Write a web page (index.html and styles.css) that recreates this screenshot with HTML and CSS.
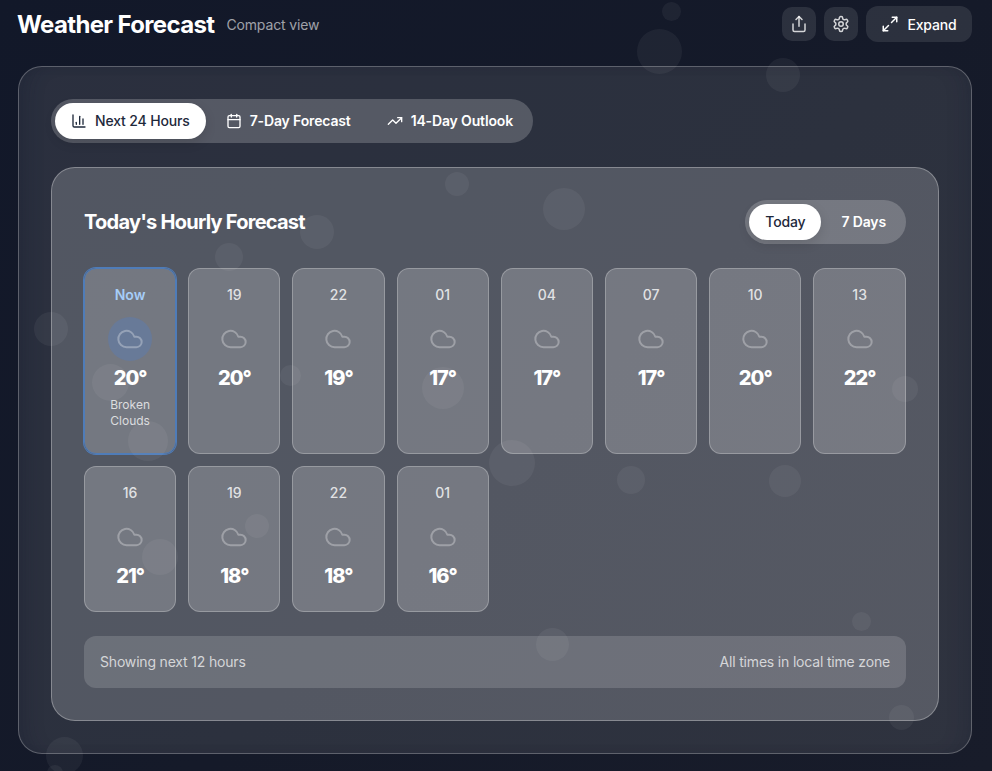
FILE: index.html
```html
<!DOCTYPE html>
<html lang="en">
<head>
    <meta charset="UTF-8">
    <meta name="viewport" content="width=device-width, initial-scale=1.0">
    <title>Weather Forecast</title>
    <link rel="stylesheet" href="styles.css">
</head>
<body>

<svg class="sprite" aria-hidden="true">
    <symbol id="i-chart" viewBox="0 0 24 24"><path d="M3 3v16a2 2 0 0 0 2 2h16"/><path d="M18 17V9"/><path d="M13 17V5"/><path d="M8 17v-3"/></symbol>
    <symbol id="i-calendar" viewBox="0 0 24 24"><path d="M8 2v4"/><path d="M16 2v4"/><rect x="3" y="4" width="18" height="18" rx="2"/><path d="M3 10h18"/></symbol>
    <symbol id="i-trend" viewBox="0 0 24 24"><polyline points="22 7 13.5 15.5 8.5 10.5 2 17"/><polyline points="16 7 22 7 22 13"/></symbol>
    <symbol id="i-share" viewBox="0 0 24 24"><path d="M4 12v8a2 2 0 0 0 2 2h12a2 2 0 0 0 2-2v-8"/><polyline points="16 6 12 2 8 6"/><line x1="12" y1="2" x2="12" y2="15"/></symbol>
    <symbol id="i-gear" viewBox="0 0 24 24"><path d="M12.22 2h-.44a2 2 0 0 0-2 2v.18a2 2 0 0 1-1 1.73l-.43.25a2 2 0 0 1-2 0l-.15-.08a2 2 0 0 0-2.73.73l-.22.38a2 2 0 0 0 .73 2.73l.15.1a2 2 0 0 1 1 1.72v.51a2 2 0 0 1-1 1.74l-.15.09a2 2 0 0 0-.73 2.73l.22.38a2 2 0 0 0 2.73.73l.15-.08a2 2 0 0 1 2 0l.43.25a2 2 0 0 1 1 1.73V20a2 2 0 0 0 2 2h.44a2 2 0 0 0 2-2v-.18a2 2 0 0 1 1-1.73l.43-.25a2 2 0 0 1 2 0l.15.08a2 2 0 0 0 2.73-.73l.22-.39a2 2 0 0 0-.73-2.73l-.15-.08a2 2 0 0 1-1-1.74v-.5a2 2 0 0 1 1-1.74l.15-.09a2 2 0 0 0 .73-2.73l-.22-.38a2 2 0 0 0-2.73-.73l-.15.08a2 2 0 0 1-2 0l-.43-.25a2 2 0 0 1-1-1.73V4a2 2 0 0 0-2-2z"/><circle cx="12" cy="12" r="3"/></symbol>
    <symbol id="i-expand" viewBox="0 0 24 24"><polyline points="15 3 21 3 21 9"/><polyline points="9 21 3 21 3 15"/><line x1="21" y1="3" x2="14" y2="10"/><line x1="3" y1="21" x2="10" y2="14"/></symbol>
    <symbol id="i-cloud" viewBox="0 0 24 24"><path d="M17.5 19H9a7 7 0 1 1 6.71-9h1.79a4.5 4.5 0 1 1 0 9Z"/></symbol>
</svg>

<header class="top-bar">
    <div class="title-group">
        <h1>Weather Forecast</h1>
        <span class="subtitle">Compact view</span>
    </div>
    <div class="actions">
        <button class="icon-btn"><svg class="icon icon-18"><use href="#i-share"/></svg></button>
        <button class="icon-btn"><svg class="icon icon-18"><use href="#i-gear"/></svg></button>
        <button class="expand-btn"><svg class="icon icon-18"><use href="#i-expand"/></svg>Expand</button>
    </div>
</header>

<main class="panel">
    <nav class="pill-group tabs">
        <button class="pill active"><svg class="icon"><use href="#i-chart"/></svg>Next 24 Hours</button>
        <button class="pill"><svg class="icon"><use href="#i-calendar"/></svg>7-Day Forecast</button>
        <button class="pill"><svg class="icon"><use href="#i-trend"/></svg>14-Day Outlook</button>
    </nav>

    <section class="forecast">
        <div class="forecast-head">
            <h2>Today's Hourly Forecast</h2>
            <div class="pill-group">
                <button class="pill active">Today</button>
                <button class="pill">7 Days</button>
            </div>
        </div>

        <div class="hours">
            <div class="hour current">
                <span class="time">Now</span>
                <span class="cloud"><svg class="icon icon-28"><use href="#i-cloud"/></svg></span>
                <span class="temp">20°</span>
                <span class="desc">Broken Clouds</span>
            </div>
            <div class="hour"><span class="time">19</span><span class="cloud"><svg class="icon icon-28"><use href="#i-cloud"/></svg></span><span class="temp">20°</span></div>
            <div class="hour"><span class="time">22</span><span class="cloud"><svg class="icon icon-28"><use href="#i-cloud"/></svg></span><span class="temp">19°</span></div>
            <div class="hour"><span class="time">01</span><span class="cloud"><svg class="icon icon-28"><use href="#i-cloud"/></svg></span><span class="temp">17°</span></div>
            <div class="hour"><span class="time">04</span><span class="cloud"><svg class="icon icon-28"><use href="#i-cloud"/></svg></span><span class="temp">17°</span></div>
            <div class="hour"><span class="time">07</span><span class="cloud"><svg class="icon icon-28"><use href="#i-cloud"/></svg></span><span class="temp">17°</span></div>
            <div class="hour"><span class="time">10</span><span class="cloud"><svg class="icon icon-28"><use href="#i-cloud"/></svg></span><span class="temp">20°</span></div>
            <div class="hour"><span class="time">13</span><span class="cloud"><svg class="icon icon-28"><use href="#i-cloud"/></svg></span><span class="temp">22°</span></div>
            <div class="hour"><span class="time">16</span><span class="cloud"><svg class="icon icon-28"><use href="#i-cloud"/></svg></span><span class="temp">21°</span></div>
            <div class="hour"><span class="time">19</span><span class="cloud"><svg class="icon icon-28"><use href="#i-cloud"/></svg></span><span class="temp">18°</span></div>
            <div class="hour"><span class="time">22</span><span class="cloud"><svg class="icon icon-28"><use href="#i-cloud"/></svg></span><span class="temp">18°</span></div>
            <div class="hour"><span class="time">01</span><span class="cloud"><svg class="icon icon-28"><use href="#i-cloud"/></svg></span><span class="temp">16°</span></div>
        </div>

        <div class="note">
            <span>Showing next 12 hours</span>
            <span>All times in local time zone</span>
        </div>
    </section>
</main>

<!-- floating background bubbles -->
<div class="bubbles" aria-hidden="true">
    <i class="b1"></i><i class="b2"></i><i class="b3"></i><i class="b4"></i><i class="b5"></i><i class="b6"></i>
    <i class="b7"></i><i class="b8"></i><i class="b9"></i><i class="b10"></i><i class="b11"></i><i class="b12"></i>
    <i class="b13"></i><i class="b14"></i><i class="b15"></i><i class="b16"></i><i class="b17"></i><i class="b18"></i>
    <i class="b19"></i><i class="b20"></i><i class="b21"></i><i class="b22"></i><i class="b23"></i>
</div>

</body>
</html>
```

FILE: styles.css
```css
* {
    box-sizing: border-box;
}
html, body {
    height: 100%;
}
body {
    margin: 0;
    padding: 6px 20px 17px 18px;
    height: 771px;
    overflow: hidden;
    position: relative;
    font-family: Inter, "Liberation Sans", sans-serif;
    color: #fff;
    background: linear-gradient(135deg, #121829 0%, #151a29 55%, #181c2a 100%);
}
button {
    font: inherit;
    color: inherit;
    border: none;
    background: none;
    cursor: pointer;
}
.sprite {
    display: none;
}
.icon {
    width: 16px;
    height: 16px;
    flex: none;
    fill: none;
    stroke: currentColor;
    stroke-width: 2;
    stroke-linecap: round;
    stroke-linejoin: round;
}
.icon-18 {
    width: 18px;
    height: 18px;
}
.icon-28 {
    width: 28px;
    height: 28px;
    stroke-width: 1.7;
}

/* header */
.top-bar {
    display: flex;
    justify-content: space-between;
    align-items: center;
    height: 36px;
    margin-bottom: 24px;
}
.title-group {
    display: flex;
    align-items: center;
    gap: 12px;
}
h1 {
    margin: 2px 0 0 -1px;
    font-size: 24px;
    line-height: 36px;
    font-weight: 700;
    letter-spacing: -0.65px;
}
.subtitle {
    font-size: 14px;
    letter-spacing: -0.15px;
    color: rgba(255, 255, 255, 0.6);
}
.actions {
    display: flex;
    align-items: center;
    gap: 8px;
}
.icon-btn {
    width: 34px;
    height: 34px;
    display: flex;
    align-items: center;
    justify-content: center;
    border-radius: 10px;
    background: rgba(255, 255, 255, 0.1);
    color: rgba(255, 255, 255, 0.8);
}
.expand-btn {
    height: 36px;
    width: 106px;
    display: flex;
    align-items: center;
    justify-content: center;
    gap: 8px;
    border-radius: 12px;
    background: rgba(255, 255, 255, 0.1);
    font-size: 14px;
    font-weight: 500;
    letter-spacing: -0.15px;
}

/* main glass panel */
.panel {
    width: 954px;
    height: 688px;
    padding: 32px;
    border: 1px solid rgba(255, 255, 255, 0.24);
    border-radius: 24px;
    background: rgba(255, 255, 255, 0.1);
    box-shadow: inset 16px 0 20px -12px rgba(15, 23, 42, 0.3), inset -16px 0 20px -12px rgba(15, 23, 42, 0.22);
}
.pill-group {
    display: inline-flex;
    gap: 4px;
    padding: 4px;
    height: 44px;
    border-radius: 22px;
    background: rgba(255, 255, 255, 0.2);
}
.pill {
    display: flex;
    align-items: center;
    gap: 8px;
    height: 36px;
    padding: 0 16px 1px;
    border-radius: 18px;
    font-size: 14px;
    font-weight: 600;
    letter-spacing: -0.15px;
    white-space: nowrap;
}
.pill.active {
    background: #fff;
    color: #1e293b;
    font-weight: 500;
    box-shadow: 0 4px 12px rgba(0, 0, 0, 0.12);
}
.tabs {
    display: flex;
    width: max-content;
    margin-bottom: 24px;
}

/* forecast card */
.forecast {
    height: 554px;
    padding: 32px;
    border: 1px solid rgba(255, 255, 255, 0.3);
    border-radius: 24px;
    background: rgba(255, 255, 255, 0.19);
}
.forecast-head {
    display: flex;
    justify-content: space-between;
    align-items: center;
    margin-bottom: 24px;
}
h2 {
    margin: 0;
    font-size: 20px;
    line-height: 28px;
    font-weight: 700;
    letter-spacing: -0.75px;
}
.hours {
    display: grid;
    grid-template-columns: repeat(7, 92.2px) 1fr;
    gap: 12px;
    margin-bottom: 24px;
}
.hour {
    display: flex;
    flex-direction: column;
    align-items: center;
    padding: 16px 8px 21px;
    border: 1px solid rgba(255, 255, 255, 0.25);
    border-radius: 12px;
    background: rgba(255, 255, 255, 0.2);
}
.time {
    font-size: 14px;
    line-height: 20px;
    font-weight: 500;
    color: rgba(255, 255, 255, 0.8);
    margin-bottom: 12px;
}
.cloud {
    width: 44px;
    height: 44px;
    display: flex;
    align-items: center;
    justify-content: center;
    border-radius: 50%;
    color: rgba(255, 255, 255, 0.3);
    margin-bottom: 3px;
}
.temp {
    font-size: 20px;
    line-height: 29px;
    height: 28px;
    font-weight: 800;
    letter-spacing: -1px;
}
.desc {
    margin: 5px 0 3px;
    font-size: 12px;
    line-height: 16px;
    text-align: center;
    color: rgba(255, 255, 255, 0.75);
}
.hour.current {
    border-color: #4f7cb8;
    box-shadow: 0 0 0 1px #4f7cb8;
}
.current .time {
    color: #a6cdf8;
    font-weight: 600;
}
.current .cloud {
    background: rgba(59, 130, 246, 0.2);
}
.note {
    display: flex;
    justify-content: space-between;
    align-items: center;
    height: 52px;
    padding: 0 16px 2px;
    border-radius: 12px;
    background: rgba(255, 255, 255, 0.15);
    font-size: 14px;
    letter-spacing: -0.18px;
    color: rgba(255, 255, 255, 0.72);
}

/* bubbles float over everything */
.bubbles {
    position: absolute;
    inset: 0;
    pointer-events: none;
}
.bubbles i {
    position: absolute;
    border-radius: 50%;
    background: rgba(255, 255, 255, 0.05);
}
.b1 { left: 662px; top: 2px; width: 19px; height: 19px; }
.b2 { left: 637px; top: 29px; width: 45px; height: 45px; }
.b3 { left: 766px; top: 58px; width: 34px; height: 34px; }
.b4 { left: 445px; top: 172px; width: 24px; height: 24px; }
.b5 { left: 543px; top: 188px; width: 42px; height: 42px; }
.b6 { left: 300px; top: 215px; width: 34px; height: 34px; }
.b7 { left: 215px; top: 243px; width: 28px; height: 28px; }
.b8 { left: 34px; top: 312px; width: 34px; height: 34px; }
.b9 { left: 280px; top: 365px; width: 21px; height: 21px; }
.b10 { left: 92px; top: 364px; width: 37px; height: 37px; }
.b11 { left: 422px; top: 367px; width: 42px; height: 42px; }
.b12 { left: 128px; top: 421px; width: 40px; height: 40px; }
.b13 { left: 892px; top: 376px; width: 26px; height: 26px; }
.b14 { left: 489px; top: 440px; width: 46px; height: 46px; }
.b15 { left: 617px; top: 466px; width: 28px; height: 28px; }
.b16 { left: 769px; top: 465px; width: 32px; height: 32px; }
.b17 { left: 245px; top: 514px; width: 24px; height: 24px; }
.b18 { left: 142px; top: 539px; width: 36px; height: 36px; }
.b19 { left: 536px; top: 628px; width: 33px; height: 33px; }
.b20 { left: 852px; top: 612px; width: 19px; height: 19px; }
.b21 { left: 889px; top: 705px; width: 25px; height: 25px; }
.b22 { left: 46px; top: 737px; width: 37px; height: 37px; }
.b23 { left: 47px; top: 765px; width: 16px; height: 16px; }
```
